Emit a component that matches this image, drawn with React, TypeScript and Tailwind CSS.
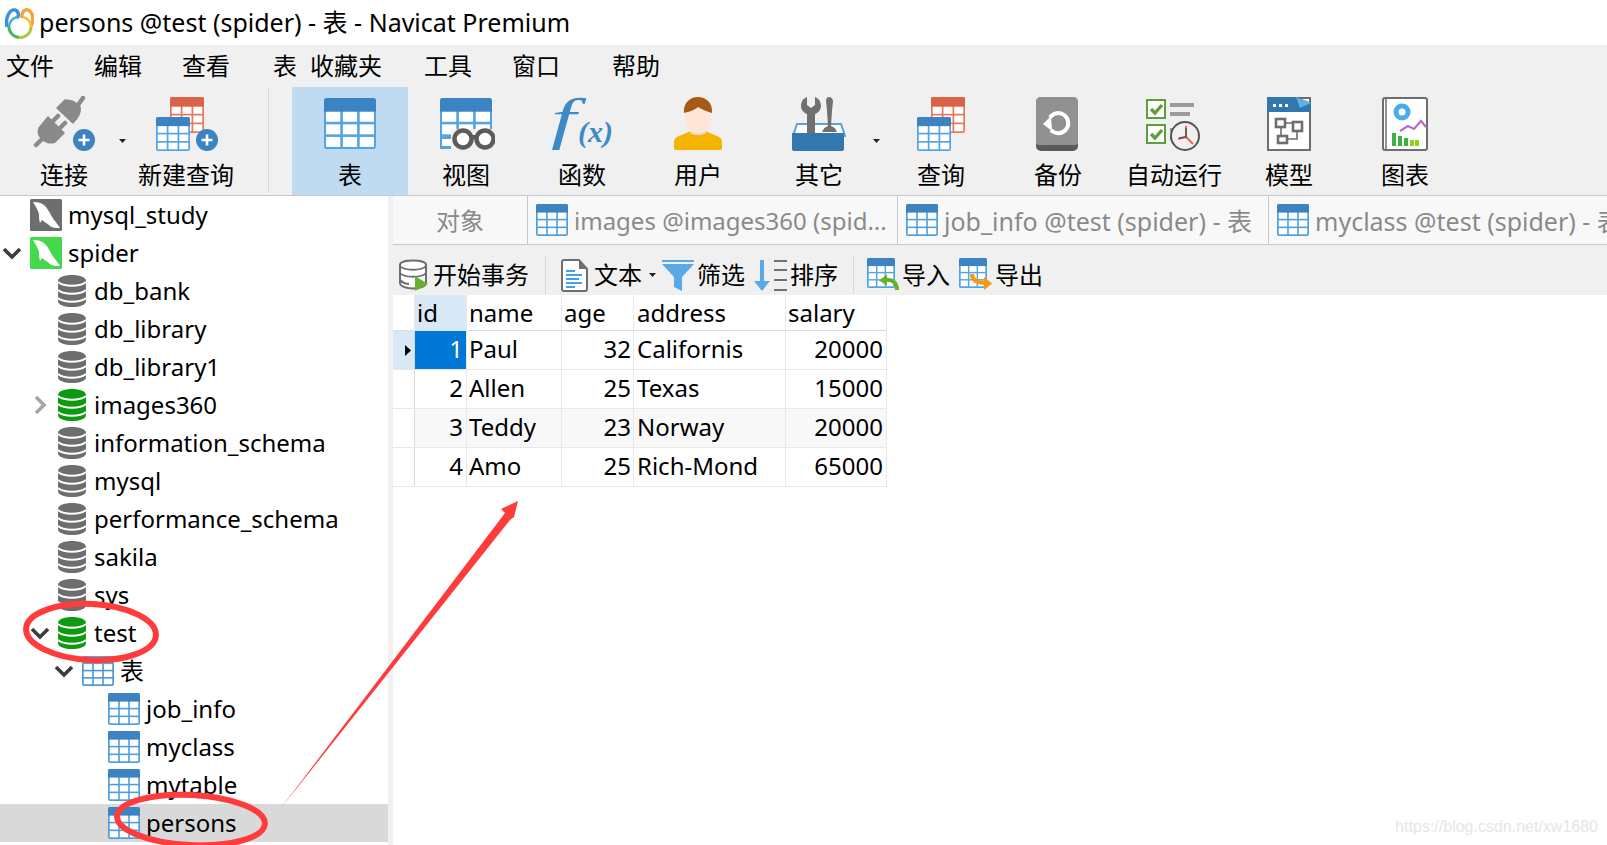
import React from "react";

const TEXT_FONT = "font-['Noto_Sans','Noto_Sans_CJK_SC',sans-serif]";

const Grid = ({ x, y, w, h, head, line }: { x: number; y: number; w: number; h: number; head: string; line: string }) => {
  const b = Math.max(w * 0.04, 1.7);
  const top = y + h * 0.27;
  const gap = w * 0.05;
  const cw = (w - b * 2 - gap * 2) / 3;
  const ch = (y + h - b - top - gap * 2) / 3;
  return (
    <g>
      <rect x={x} y={y} width={w} height={h} rx={w * 0.06} fill={line} />
      <path d={`M${x} ${top}V${y + w * 0.06}a${w * 0.06} ${w * 0.06} 0 0 1 ${w * 0.06} ${-w * 0.06}H${x + w * 0.94}a${w * 0.06} ${w * 0.06} 0 0 1 ${w * 0.06} ${w * 0.06}V${top}Z`} fill={head} />
      {[0, 1, 2].map((r) =>
        [0, 1, 2].map((c) => (
          <rect key={`${r}-${c}`} x={x + b + c * (cw + gap)} y={top + r * (ch + gap)} width={cw} height={ch} fill="#fff" />
        ))
      )}
    </g>
  );
};

const TableIcon = ({ size = 32, plain = false }: { size?: number; plain?: boolean }) => (
  <svg width={size} height={size} viewBox="0 0 32 32" className="shrink-0">
    <Grid x={0} y={plain ? 1 : 0} w={32} h={plain ? 30 : 32} head={plain ? "#5aa5e0" : "#3b84c1"} line={plain ? "#4c96d4" : "#4f9fe0"} />
  </svg>
);

const BigTable = () => (
  <svg width="52" height="52" viewBox="0 0 52 52">
    <Grid x={0} y={0} w={52} h={51} head="#3b84c1" line="#54a4e4" />
  </svg>
);

const PlusBadge = ({ cx, cy }: { cx: number; cy: number }) => (
  <g>
    <circle cx={cx} cy={cy} r="11" fill="#3b84c1" />
    <path d={`M${cx - 5.5} ${cy}h11M${cx} ${cy - 5.5}v11`} stroke="#fff" strokeWidth="2.6" />
  </g>
);

const PlugIcon = () => (
  <svg width="64" height="56" viewBox="0 0 64 56">
    <g fill="#8a8a8a" stroke="#8a8a8a" strokeLinejoin="round">
      <path d="M7 32L16 21 32 37 23 46C18 48 12 46 9 42 6 39 6 35 7 32z" strokeWidth="1.5" />
      <path d="M25 12L33 4C39 4 45 7 48 11 49 16 46 22 41 27z" strokeWidth="1.5" />
    </g>
    <path d="M20 26l6-6M27 33l6-6M11 42l-7 7M46 9l5-7" fill="none" stroke="#8a8a8a" strokeWidth="4.5" strokeLinecap="round" />
    <PlusBadge cx={52} cy={44} />
  </svg>
);

const QueryIcon = ({ plus = false }: { plus?: boolean }) => (
  <svg width={plus ? 64 : 48} height="56" viewBox={plus ? "0 0 64 56" : "0 0 48 56"}>
    <Grid x={plus ? 16 : 14} y={1} w={34} h={36} head="#d96346" line="#e8775a" />
    <Grid x={plus ? 2 : 0} y={21} w={34} h={34} head="#3b84c1" line="#54a4e4" />
    {plus && <PlusBadge cx={53} cy={44} />}
  </svg>
);

const ViewIcon = () => (
  <svg width="58" height="54" viewBox="0 0 58 54">
    <Grid x={3} y={1} w={52} h={51} head="#3b84c1" line="#54a4e4" />
    <rect x="14" y="32" width="44" height="22" fill="#f0f0f0" />
    <rect x="3" y="39" width="11" height="3" fill="#54a4e4" />
    <rect x="3" y="49" width="11" height="3" fill="#54a4e4" />
    <circle cx="26" cy="42" r="8.5" fill="#fff" stroke="#5c5c5c" strokeWidth="4.5" />
    <circle cx="48" cy="42" r="8.5" fill="#fff" stroke="#5c5c5c" strokeWidth="4.5" />
    <path d="M33 40h8" stroke="#5c5c5c" strokeWidth="4" />
  </svg>
);

const FunctionIcon = () => (
  <svg width="60" height="54" viewBox="0 0 60 54" className="overflow-visible">
    <text transform="translate(-1,41) scale(1.55,1)" fontFamily="Liberation Serif" fontStyle="italic" fontSize="58" fill="#3d8ac7">f</text>
    <text x="26" y="45" fontFamily="Liberation Serif" fontStyle="italic" fontWeight="700" fontSize="30" fill="#3d8ac7">(x)</text>
  </svg>
);

const UserIcon = () => (
  <svg width="48" height="54" viewBox="0 0 48 54">
    <path d="M0 45c0-3 2-5 5-6l12-5h14l12 5c3 1 5 3 5 6v6c0 1-1 2-2 2H2c-1 0-2-1-2-2z" fill="#f4b400" />
    <path d="M16 28h16v8c-3 3-13 3-16 0z" fill="#f0d2bd" />
    <ellipse cx="24" cy="20" rx="13" ry="17" fill="#fde6d5" />
    <path d="M10 16C9 6 16 0 24 0s15 6 14 16c-4-1-9-3-14-6-3 3-9 5-14 6z" fill="#a55a17" />
  </svg>
);

const ToolsIcon = () => (
  <svg width="54" height="54" viewBox="0 0 54 54">
    <path d="M5 27h44l4 12H1z" fill="#fff" stroke="#54a4e4" strokeWidth="2" />
    <g fill="#707070">
      <path d="M15 0c-3 1-6 4-6 9 0 4 3 7 6 8v21h8V17c3-1 6-4 6-8 0-5-3-8-6-9v8l-4 3-4-3z" />
      <path d="M37 0c-2 0-3 2-3 4l1 10 1 15c-3 1-5 3-6 6h15c-1-3-3-5-6-6l1-15 1-10c0-2-2-4-4-4z" />
    </g>
    <path d="M0 36h52v16c0 1-1 2-2 2H2c-1 0-2-1-2-2z" fill="#3277ae" />
  </svg>
);

const BackupIcon = () => (
  <svg width="42" height="54" viewBox="0 0 42 54" className="mr-[2px]">
    <rect x="0" y="0" width="42" height="54" rx="5" fill="#5a5a5a" />
    <path d="M0 5a5 5 0 0 1 5-5h32a5 5 0 0 1 5 5v40a3 3 0 0 1-3 3H3a3 3 0 0 1-3-3z" fill="#919191" />
    <path d="M14 20.5A10 10 0 1 1 15 33" fill="none" stroke="#fff" strokeWidth="4" />
    <path d="M7 27l8-8 1 15z" fill="#fff" />
  </svg>
);

const AutoRunIcon = () => (
  <svg width="56" height="54" viewBox="0 0 56 54" className="mr-[2px]">
    <g fill="#fff" stroke="#5f9e3c" strokeWidth="2">
      <rect x="2" y="3" width="18" height="18" />
      <rect x="2" y="28" width="18" height="18" />
    </g>
    <path d="M6 12l4 4 7-8M6 37l4 4 7-8" fill="none" stroke="#5f9e3c" strokeWidth="3.4" />
    <path d="M25 6h24v4H25zM25 15h20v4H25zM25 31h6v4h-6zM25 39h6v4h-6z" fill="#9a9a9a" />
    <circle cx="40" cy="39" r="14" fill="#f0f0f0" stroke="#555" strokeWidth="2" />
    <path d="M41 29v11l-8 2M41 40l7 7" fill="none" stroke="#f0654e" strokeWidth="2" />
    <path d="M41 31v9l-7 1" fill="none" stroke="#555" strokeWidth="1.5" />
  </svg>
);

const ModelIcon = () => (
  <svg width="44" height="54" viewBox="0 0 44 54">
    <path d="M1 1h42v52H1z" fill="#fff" stroke="#6e6e6e" strokeWidth="2" />
    <path d="M0 0h30l14 6v9H0z" fill="#3277ae" />
    <path d="M29 0l15 6-11 5z" fill="#62aee8" />
    <path d="M6 7h3v3H6zM12 7h3v3h-3zM18 7h3v3h-3z" fill="#fff" />
    <g fill="#fff" stroke="#6e6e6e" strokeWidth="2.6">
      <rect x="9" y="22" width="9" height="8" />
      <rect x="26" y="25" width="9" height="9" />
      <rect x="11" y="39" width="9" height="7" />
    </g>
    <path d="M18 26h8M14 30v9M30 34v8H20" fill="none" stroke="#6e6e6e" strokeWidth="1.6" />
  </svg>
);

const ChartIcon = () => (
  <svg width="46" height="54" viewBox="0 0 46 54">
    <rect x="1" y="1" width="44" height="52" rx="2" fill="#fff" stroke="#6e6e6e" strokeWidth="2" />
    <path d="M4 1v52" stroke="#6e6e6e" strokeWidth="1.5" />
    <circle cx="20" cy="15" r="6" fill="none" stroke="#45ade8" strokeWidth="5" />
    <path d="M18 34l8-5 6 3 7-8 5 6" fill="none" stroke="#b56cc8" strokeWidth="2.2" />
    <path d="M10 36h4v13h-4zM16 39h4v10h-4zM22 41h4v8h-4z" fill="#3eb046" />
    <path d="M28 43h4v6h-4zM33 43h4v6h-4z" fill="#8fd412" />
  </svg>
);

const Caret = () => (
  <svg width="7" height="4" viewBox="0 0 7 4" className="shrink-0">
    <path d="M0 0h7L3.5 4z" fill="#222" />
  </svg>
);

const Chevron = ({ open, light }: { open: boolean; light?: boolean }) => (
  <svg width="22" height="22" viewBox="0 0 22 22" className="ml-[-3px]">
    <path
      d={open ? "M3 7l8 8 8-8" : "M7 3l8 8-8 8"}
      fill="none"
      stroke={light ? "#a6a6a6" : "#3c3c3c"}
      strokeWidth="3.6"
    />
  </svg>
);

const ConnIcon = ({ color }: { color: string }) => (
  <svg width="32" height="32" viewBox="0 0 32 32" className="shrink-0">
    <rect width="32" height="32" rx="1.5" fill={color} />
    <path d="M3 3C8 3 13 4 16 8 20 13 22 19 25 22 27 25 29 27 30 29 26 29 23 29 20 27 17 24 14 23 12 21L10 24C9 21 9 18 9 15 8 11 6 8 3 3z" fill="#fff" />
  </svg>
);

const DbIcon = ({ color }: { color: string }) => (
  <svg width="28" height="32" viewBox="0 0 28 32" className="shrink-0">
    <path d="M0 6C0-2 28-2 28 6v20c0 8-28 8-28 0z" fill={color} />
    <path d="M0 7c5 5 23 5 28 0M0 15c5 5 23 5 28 0M0 23c5 5 23 5 28 0" fill="none" stroke="#fff" strokeWidth="1.8" />
  </svg>
);

type TreeRow = {
  label: string;
  kind: "conn" | "connOn" | "db" | "dbOn" | "tables" | "table";
  pad: string;
  gap: string;
  chevron?: "open" | "closed";
  selected?: boolean;
};

const treeRows: TreeRow[] = [
  { label: "mysql_study", kind: "conn", pad: "pl-[4px]", gap: "gap-[6px]" },
  { label: "spider", kind: "connOn", pad: "pl-[4px]", gap: "gap-[6px]", chevron: "open" },
  { label: "db_bank", kind: "db", pad: "pl-[32px]", gap: "gap-[8px]" },
  { label: "db_library", kind: "db", pad: "pl-[32px]", gap: "gap-[8px]" },
  { label: "db_library1", kind: "db", pad: "pl-[32px]", gap: "gap-[8px]" },
  { label: "images360", kind: "dbOn", pad: "pl-[32px]", gap: "gap-[8px]", chevron: "closed" },
  { label: "information_schema", kind: "db", pad: "pl-[32px]", gap: "gap-[8px]" },
  { label: "mysql", kind: "db", pad: "pl-[32px]", gap: "gap-[8px]" },
  { label: "performance_schema", kind: "db", pad: "pl-[32px]", gap: "gap-[8px]" },
  { label: "sakila", kind: "db", pad: "pl-[32px]", gap: "gap-[8px]" },
  { label: "sys", kind: "db", pad: "pl-[32px]", gap: "gap-[8px]" },
  { label: "test", kind: "dbOn", pad: "pl-[32px]", gap: "gap-[8px]", chevron: "open" },
  { label: "表", kind: "tables", pad: "pl-[56px]", gap: "gap-[6px]", chevron: "open" },
  { label: "job_info", kind: "table", pad: "pl-[82px]", gap: "gap-[6px]" },
  { label: "myclass", kind: "table", pad: "pl-[82px]", gap: "gap-[6px]" },
  { label: "mytable", kind: "table", pad: "pl-[82px]", gap: "gap-[6px]" },
  { label: "persons", kind: "table", pad: "pl-[82px]", gap: "gap-[6px]", selected: true },
];

const TreeIcon = ({ kind }: { kind: TreeRow["kind"] }) => {
  if (kind === "conn") return <ConnIcon color="#6e6e6e" />;
  if (kind === "connOn") return <ConnIcon color="#44d84c" />;
  if (kind === "db") return <DbIcon color="#6e6e6e" />;
  if (kind === "dbOn") return <DbIcon color="#0c9a10" />;
  if (kind === "tables") return <TableIcon plain />;
  return <TableIcon />;
};

const tools = [
  { label: "表", width: "w-[116px]", icon: <BigTable />, active: true },
  { label: "视图", width: "w-[116px]", icon: <ViewIcon /> },
  { label: "函数", width: "w-[116px]", icon: <FunctionIcon /> },
  { label: "用户", width: "w-[116px]", icon: <UserIcon /> },
  { label: "其它", width: "w-[126px]", icon: <ToolsIcon />, caret: true },
  { label: "查询", width: "w-[118px]", icon: <QueryIcon /> },
  { label: "备份", width: "w-[116px]", icon: <BackupIcon /> },
  { label: "自动运行", width: "w-[116px]", icon: <AutoRunIcon /> },
  { label: "模型", width: "w-[114px]", icon: <ModelIcon /> },
  { label: "图表", width: "w-[118px]", icon: <ChartIcon /> },
];

const ToolButton = ({ label, width, icon, active, caret }: { label: string; width: string; icon: React.ReactNode; active?: boolean; caret?: boolean }) => (
  <div className={`${width} h-full relative flex flex-col items-center pt-[10px] ${active ? "bg-[#bfdbf2]" : ""}`}>
    <div className="h-[54px] flex items-center justify-center">{icon}</div>
    <div className="h-[34px] mt-[7px] leading-[34px] text-[24px] text-black">{label}</div>
    {caret && (
      <div className="absolute right-[2px] top-[52px] flex">
        <Caret />
      </div>
    )}
  </div>
);

const menus = [
  { label: "文件", cls: "w-[88px]" },
  { label: "编辑", cls: "w-[88px]" },
  { label: "查看", cls: "w-[91px]" },
  { label: "表", cls: "w-[37px]" },
  { label: "收藏夹", cls: "w-[114px]" },
  { label: "工具", cls: "w-[88px]" },
  { label: "窗口", cls: "w-[100px]" },
  { label: "帮助", cls: "w-[60px]" },
];

const people = [
  { id: 1, name: "Paul", age: 32, address: "Californis", salary: 20000 },
  { id: 2, name: "Allen", age: 25, address: "Texas", salary: 15000 },
  { id: 3, name: "Teddy", age: 23, address: "Norway", salary: 20000 },
  { id: 4, name: "Amo", age: 25, address: "Rich-Mond", salary: 65000 },
];

const COLS = "grid grid-cols-[22px_52px_95px_72px_152px_101px]";

const Tab = ({ title, width, textSize }: { title: string; width: string; textSize: string }) => (
  <div className={`${width} h-full flex items-center gap-[6px] pl-[8px] border-r border-[#c8c8c8] shrink-0 whitespace-nowrap text-[#8a8a8a]`}>
    <TableIcon />
    <span className={`${textSize} leading-[32px] mt-[1px]`}>{title}</span>
  </div>
);

const Sep = () => <div className="w-px h-[38px] bg-[#d8d8d8] shrink-0" />;

export default function App() {
  return (
    <div className={`relative h-screen w-full overflow-hidden bg-white text-[24px] text-black ${TEXT_FONT}`}>
      {/* title bar */}
      <div className="h-[45px] flex items-center pl-[4px] gap-[5px] whitespace-nowrap text-[25px]">
        <svg width="30" height="32" viewBox="0 0 30 32" className="shrink-0">
          <path d="M3 20C1 10 6 2 11 3 15 4 15 9 13 11" fill="none" stroke="#3f8fe0" strokeWidth="3.4" />
          <path d="M18 11C17 6 20 2 24 3 29 5 30 13 27 19" fill="none" stroke="#f2a33a" strokeWidth="3.4" />
          <path d="M5 20A11 10.5 0 0 0 15.5 30.5" fill="none" stroke="#45b85a" strokeWidth="3" />
          <path d="M15.5 30.5A11 10.5 0 0 0 27 20" fill="none" stroke="#a8c93a" strokeWidth="3" />
          <path d="M5 20A11 10.5 0 0 1 13 10" fill="none" stroke="#3fb0d8" strokeWidth="2.6" />
          <path d="M19 10A11 10.5 0 0 1 27 20" fill="none" stroke="#f2c13a" strokeWidth="2.6" />
        </svg>
        <span>persons @test (spider) - 表 - Navicat Premium</span>
      </div>

      {/* menu */}
      <div className="h-[42px] flex items-center bg-[#f0f0f0] pl-[6px] whitespace-nowrap">
        {menus.map((m) => (
          <div key={m.label} className={m.cls}>{m.label}</div>
        ))}
      </div>

      {/* toolbar */}
      <div className="h-[109px] flex bg-[#f0f0f0] border-b border-[#c8c8c8] whitespace-nowrap">
        <ToolButton label="连接" width="w-[128px]" icon={<PlugIcon />} caret />
        <ToolButton label="新建查询" width="w-[116px]" icon={<QueryIcon plus />} />
        <div className="ml-[24px] mr-[23px] my-[2px] w-px bg-[#d8d8d8]" />
        {tools.map((t) => (
          <ToolButton key={t.label} {...t} />
        ))}
      </div>

      <div className="flex h-[649px]">
        {/* connection tree */}
        <div className="w-[388px] shrink-0 overflow-hidden">
          {treeRows.map((row) => (
            <div key={row.label} className={`h-[38px] flex items-center whitespace-nowrap ${row.pad} ${row.selected ? "bg-[#d9d9d9]" : ""}`}>
              <div className="w-[26px] h-full flex items-center shrink-0">
                {row.chevron && <Chevron open={row.chevron === "open"} light={row.label === "images360"} />}
              </div>
              <div className={`flex items-center ${row.gap}`}>
                <TreeIcon kind={row.kind} />
                <span>{row.label}</span>
              </div>
            </div>
          ))}
        </div>
        <div className="w-[5px] bg-[#f0f0f0] shrink-0" />

        <div className="flex-1 min-w-0 overflow-hidden">
          {/* tabs */}
          <div className="h-[49px] flex items-center bg-[#f8f8f8] border-b border-[#c8c8c8] overflow-hidden">
            <div className="w-[135px] h-full flex items-center justify-center border-r border-[#c8c8c8] text-[#8a8a8a] shrink-0 pt-[2px]">对象</div>
            <Tab title="images @images360 (spid..." width="w-[370px]" textSize="text-[24px]" />
            <Tab title="job_info @test (spider) - 表" width="w-[371px]" textSize="text-[25px]" />
            <Tab title="myclass @test (spider) - 表" width="w-[371px]" textSize="text-[25px]" />
          </div>

          {/* object toolbar */}
          <div className="h-[50px] flex items-center bg-[#f0f0f0] whitespace-nowrap pt-[10px]">
            <div className="w-[152px] flex items-center gap-[5px] pl-[6px] shrink-0">
              <svg width="29" height="32" viewBox="0 0 29 32" className="shrink-0">
                <path d="M1 6c0-6 26-6 26 0v18c0 5-12 6-18 5-5-1-8-2-8-5z" fill="#fff" stroke="#6e6e6e" strokeWidth="2" />
                <path d="M1 7c4 5 22 5 26 0M1 14c4 5 22 5 26 0M1 21c3 3 6 4 9 4" fill="none" stroke="#6e6e6e" strokeWidth="2" />
                <path d="M16 17l13 8-13 7z" fill="#63b32e" />
              </svg>
              <span>开始事务</span>
            </div>
            <Sep />
            <div className="ml-[15px] w-[33px] shrink-0">
              <svg width="27" height="33" viewBox="0 0 27 33">
                <path d="M1 3a2 2 0 0 1 2-2h15l8 9v20a2 2 0 0 1-2 2H3a2 2 0 0 1-2-2z" fill="#fff" stroke="#6e6e6e" strokeWidth="2" />
                <path d="M18 1v9h8z" fill="#6e6e6e" />
                <path d="M5 12h9M5 16h16M5 20h13M5 24h16M5 28h9" stroke="#45a0e8" strokeWidth="2" />
              </svg>
            </div>
            <span>文本</span>
            <div className="ml-[7px] mr-[7px] flex"><Caret /></div>
            <svg width="32" height="32" viewBox="0 0 32 32" className="shrink-0 ml-[-1px]">
              <path d="M0 1h32v2H0z" fill="#5aa9e6" />
              <path d="M0 5h32L20 18v14l-8-4V18z" fill="#5aa9e6" />
            </svg>
            <span className="ml-[3px]">筛选</span>
            <svg width="33" height="33" viewBox="0 0 33 33" className="shrink-0 ml-[9px]">
              <path d="M8 1v24" stroke="#5aa9e6" strokeWidth="4" />
              <path d="M0 22h16l-8 10z" fill="#5aa9e6" />
              <path d="M20 2h13M20 11h13M20 21h13M20 31h13" stroke="#707070" strokeWidth="2" />
            </svg>
            <span className="ml-[3px]">排序</span>
            <div className="ml-[15px] flex"><Sep /></div>
            <svg width="33" height="34" viewBox="0 0 33 34" className="shrink-0 ml-[13px]">
              <Grid x={0} y={0} w={28} h={30} head="#3b84c1" line="#54a4e4" />
              <path d="M12 22.5l8-6v11z" fill="#63b32e" />
              <path d="M18 22c8-1 12 3 12 10" fill="none" stroke="#63b32e" strokeWidth="4" />
            </svg>
            <span className="ml-[2px]">导入</span>
            <svg width="33" height="34" viewBox="0 0 33 34" className="shrink-0 ml-[9px]">
              <Grid x={0} y={0} w={28} h={30} head="#3b84c1" line="#54a4e4" />
              <path d="M13 16c0 6 4 9 14 9" fill="none" stroke="#f7980f" strokeWidth="4" />
              <path d="M33 25.5l-8-6.5v13z" fill="#f7980f" />
            </svg>
            <span className="ml-[3px]">导出</span>
          </div>

          {/* data grid */}
          <div className="w-[494px]">
            <div className={`${COLS} h-[36px] leading-[36px] border-b border-[#dcdcdc]`}>
              <div className="border-r border-[#e8e8e8]" />
              <div className="pl-[2px] bg-[#d8e8f6] border-r border-[#e8e8e8]">id</div>
              <div className="pl-[2px] border-r border-[#e8e8e8]">name</div>
              <div className="pl-[2px] border-r border-[#e8e8e8]">age</div>
              <div className="pl-[3px] border-r border-[#e8e8e8]">address</div>
              <div className="pl-[2px] border-r border-[#e8e8e8]">salary</div>
            </div>
            {people.map((p) => (
              <div key={p.id} className={`${COLS} h-[39px] leading-[36px] border-b border-[#e8e8e8] ${p.id === 3 ? "bg-[#f8f8f8]" : ""}`}>
                <div className={`flex items-center justify-end pr-[3px] border-r border-[#d8d8d8] ${p.id === 1 ? "bg-[#d8e8f6]" : "bg-white"}`}>
                  {p.id === 1 && (
                    <svg width="6" height="11" viewBox="0 0 6 11"><path d="M0 0l6 5.5L0 11z" fill="#000" /></svg>
                  )}
                </div>
                <div className={`text-right pr-[3px] border-r border-[#e8e8e8] ${p.id === 1 ? "bg-[#0078d7] text-white" : ""}`}>{p.id}</div>
                <div className="pl-[2px] border-r border-[#e8e8e8]">{p.name}</div>
                <div className="text-right pr-[2px] border-r border-[#e8e8e8]">{p.age}</div>
                <div className="pl-[3px] border-r border-[#e8e8e8]">{p.address}</div>
                <div className="text-right pr-[3px] border-r border-[#e8e8e8]">{p.salary}</div>
              </div>
            ))}
          </div>
        </div>
      </div>

      {/* hand-drawn annotations on top of the screenshot */}
      <svg className="absolute inset-0 w-full h-full pointer-events-none" viewBox="0 0 1607 845">
        <ellipse cx="91" cy="632" rx="65" ry="28" fill="none" stroke="#ff3b3b" strokeWidth="6" transform="rotate(3 91 632)" />
        <ellipse cx="191" cy="820" rx="74" ry="25" fill="none" stroke="#ff3b3b" strokeWidth="6" transform="rotate(3 191 820)" />
        <path d="M518 501L501 509 505 513 281 808 510 520 514 517z" fill="#ff3b3b" />
      </svg>

      <div className="absolute right-[9px] bottom-[7px] text-[16px] leading-[22px] text-[#e6e6e6] font-['Liberation_Sans',sans-serif]">
        https://blog.csdn.net/xw1680
      </div>
    </div>
  );
}
